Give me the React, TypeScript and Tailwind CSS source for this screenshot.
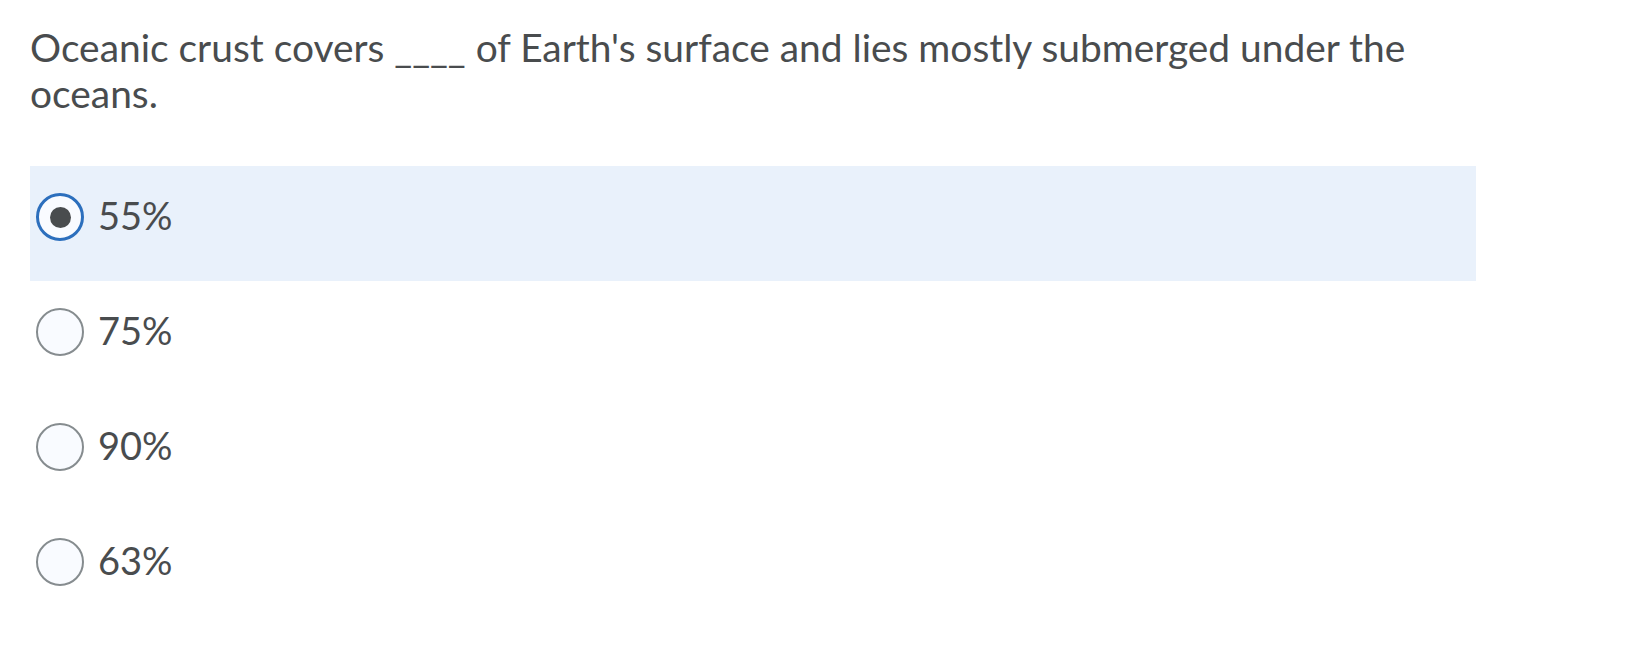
import React from "react";

const options = [
  { label: "55%", selected: true },
  { label: "75%", selected: false },
  { label: "90%", selected: false },
  { label: "63%", selected: false },
];

function Radio({ selected }: { selected: boolean }) {
  if (selected) {
    return (
      <div className="flex h-[48px] w-[48px] shrink-0 items-center justify-center rounded-full border-[3px] border-[#2c6fbd] bg-[#f9fbff]">
        <div className="h-[21px] w-[21px] rounded-full bg-[#494c4e]" />
      </div>
    );
  }
  return <div className="h-[48px] w-[48px] shrink-0 rounded-full border-2 border-[#868c8f] bg-[#f9fbff]" />;
}

export default function App() {
  return (
    <div className="min-h-[666px] w-full bg-white text-[#494c4e]" style={{ fontFamily: "Lato, 'Noto Sans', sans-serif" }}>
      <div className="px-[30px] pt-[24px]">
        <p className="w-[1420px] text-[38.9px] leading-[46px]">
          Oceanic crust covers ____ of Earth's surface and lies mostly submerged under the oceans.
        </p>
        <div className="mt-[50px] w-[1446px]">
          {options.map((o) => (
            <div
              key={o.label}
              className={`flex h-[115px] items-start pl-[6px] pt-[26px] ${o.selected ? "bg-[#e9f1fb]" : ""}`}
            >
              <div className="flex items-center gap-[14px]">
                <Radio selected={o.selected} />
                <span className="pb-[4px] text-[38px] leading-[46px]">{o.label}</span>
              </div>
            </div>
          ))}
        </div>
      </div>
    </div>
  );
}
